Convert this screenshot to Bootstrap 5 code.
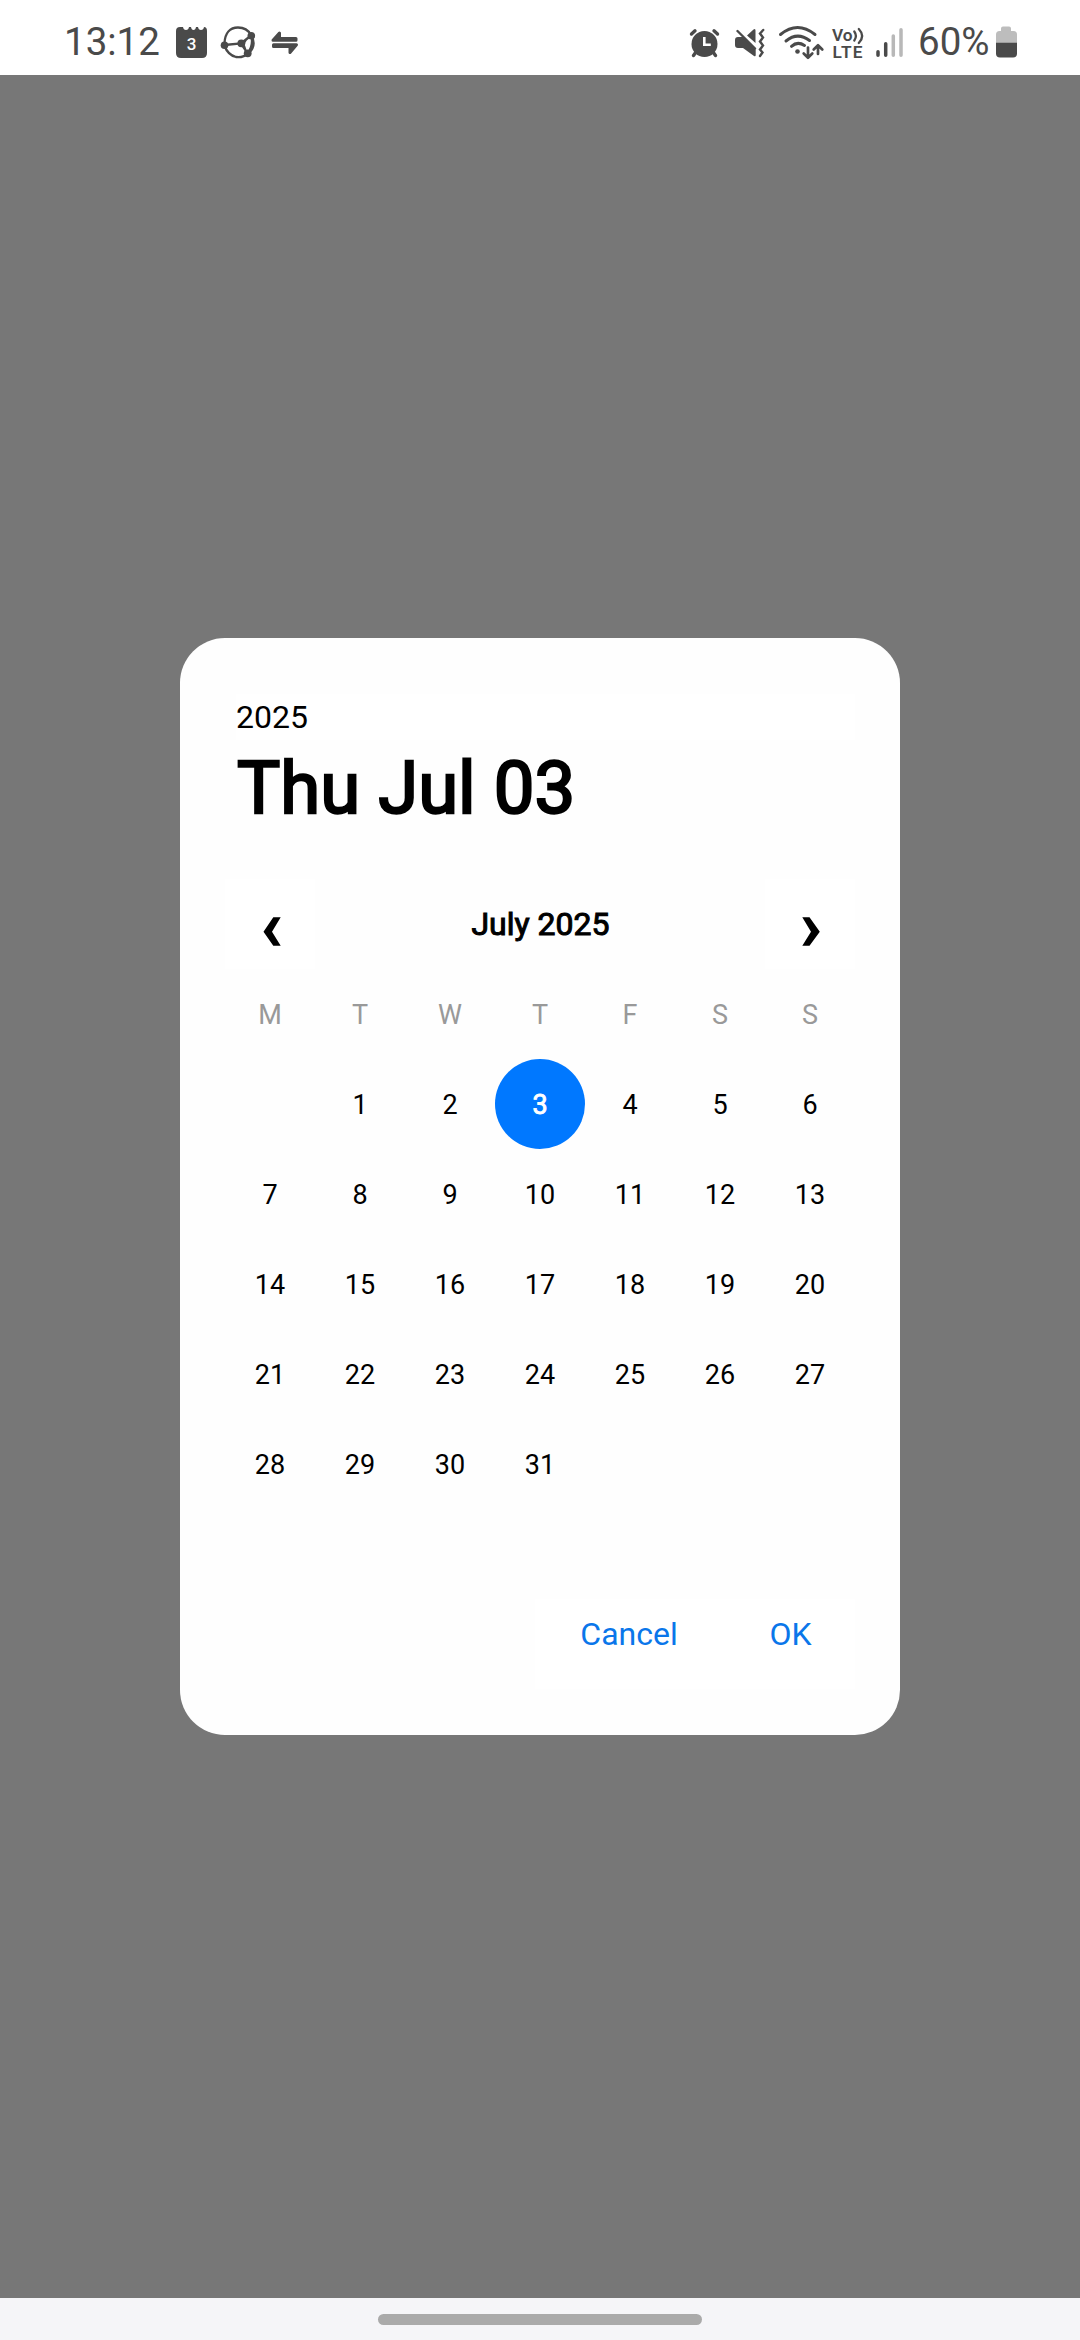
<!DOCTYPE html>
<html lang="en">
<head>
<meta charset="utf-8">
<meta name="viewport" content="width=device-width, initial-scale=1">
<title>Date picker</title>
<link href="https://cdn.jsdelivr.net/npm/bootstrap@5.3.0/dist/css/bootstrap.min.css" rel="stylesheet">
<style>
body{font-family:Roboto,"Liberation Sans",sans-serif;color:#000;background:#777}
.screen{width:1080px;height:2340px}
.status{height:75px;background:#fff;color:#4a4a4a;font-size:38.5px;line-height:75px;padding:4px 63px 0 64px;white-space:nowrap}
.status svg{margin-top:-4px;flex:none}
.clock{width:108px}
.batt-pct{width:75px}
.picker{width:720px;height:1097px;padding:56px 45px 46px;border:0;border-radius:45px;background:#fefefe}
.heading-block{height:185px;padding-left:11px}
.year{font-size:32px;line-height:46px;background:#fff}
.fauxbold{-webkit-text-stroke:.032em currentColor}
.picked{font-size:72.5px;line-height:90px;padding:4px 0 0 1px;font-weight:400;white-space:nowrap}
.arrow-btn{width:90px;height:90px;background:#fff;border:0;border-radius:0}
.month{font-size:32px;line-height:90px;padding-left:1px}
.week{display:grid;grid-template-columns:repeat(7,90px);grid-auto-rows:90px}
.week>span{font-size:27px;line-height:92px;text-align:center}
.week>.dow{color:#999}
.week>.chosen{background:#0078ff;color:#fff;border-radius:50%}
.actions{height:90px;width:320px;background:#fff}
.actions .btn{font-size:32px;line-height:46px;color:#0a76ea;border:0;border-radius:0;padding:12px 0 32px}
.actions .ok{width:129px}
.actions .cancel{width:191px;padding-right:3px}
.gesture{height:42px;background:#f5f5f8;padding-top:16px}
.pill{width:324px;height:11px;background:#aaa}
</style>
<script src="https://cdn.jsdelivr.net/npm/bootstrap@5.3.0/dist/js/bootstrap.bundle.min.js"></script>
</head>
<body>
<div class="screen d-flex flex-column">
  <header class="status d-flex justify-content-between">
    <div class="d-flex">
      <span class="clock">13:12</span>
      <!-- calendar -->
      <svg width="42" height="75" viewBox="172 0 42 75"><path fill="#4a4a4a" d="M180 27h3q.5 3 3 3t3-3h2q.500 3 2.500 3t2.500-3h2q.500 3 3 3t3-3h0q3 0 3 4v22q0 5-5 5h-21q-5 0-5-5V31q0-4 4-4z"/><text x="191.500" y="50" text-anchor="middle" font-size="17" font-weight="500" fill="#fff">3</text></svg>
      <!-- globe with nodes -->
      <svg width="48" height="75" viewBox="214 0 48 75"><g fill="none" stroke="#4a4a4a" stroke-width="2.300"><path d="M224.500 43C225 33 230 27.500 238 27.500Q247 27.500 251 35Q257 45 249 53Q243 58 236 57Q228 55 224.500 46M224.500 45L241 43.500L251 35.500M241 43.500L247.500 53M251.500 36Q243 40 244 46Q245 51 248 53M251 35Q254 44 248 53"/></g><g fill="#4a4a4a"><circle cx="224.500" cy="45.300" r="3.800"/><circle cx="241.300" cy="43.300" r="3.900"/><circle cx="251.300" cy="35.800" r="3.800"/><circle cx="247.700" cy="53.300" r="3.900"/></g></svg>
      <!-- transfer arrows -->
      <svg width="40" height="75" viewBox="262 0 40 75"><path fill="#4a4a4a" stroke="#4a4a4a" stroke-width="3" stroke-linejoin="round" stroke-linecap="round" d="M273 40.300L279.500 33L279.500 38.500H296V40.300ZM273.500 44.800H296.500L290 52.500V46.500H273.500Z"/></svg>
    </div>
    <div class="d-flex">
      <!-- alarm -->
      <svg width="42" height="75" viewBox="686 0 42 75"><g stroke="#4a4a4a" stroke-linecap="round" fill="none"><path stroke-width="3.400" d="M691.500 34L695 30.800M717.500 34L714 30.800M696 52l-2.500 3.500M713 52l2.500 3.500"/></g><circle cx="704.500" cy="44" r="13" fill="#4a4a4a"/><path fill="none" stroke="#fff" stroke-width="2.600" d="M704.300 37v7.800h6.500"/></svg>
      <!-- sound off, vibrate -->
      <svg width="46" height="75" viewBox="728 0 46 75"><path fill="#4a4a4a" d="M738 37h5l12.700 12.500V55q0 2-1.700 1L743 48h-5q-3 0-3-3v-5q0-3 3-3zM747 35.500L753.500 29.500q2-1.500 2 1V43z"/><path fill="none" stroke="#4a4a4a" stroke-width="2.400" stroke-linecap="round" d="M737.500 31L755 48.500M763.200 30L760 33.500L763 37.500L760 41.500L763 45.500L760 49.500L762.500 52.500L760 56"/></svg>
      <!-- wifi with traffic arrows -->
      <svg width="54" height="75" viewBox="774 0 54 75"><g fill="none" stroke="#4a4a4a" stroke-width="3" stroke-linecap="round"><path d="M780.500 34.500Q797.500 20.500 815 34.500M786 41Q797.500 31.500 809.500 40.500M791.500 46.300Q797.500 40.800 804.500 45.500"/><path stroke-width="2.700" stroke-linejoin="round" d="M808 47.500V57.500M803.700 53.500L808 57.700L812.300 53.500M818 54V46M813.700 49.500L818 45.300L822.300 49.500"/></g><circle cx="797.500" cy="51.500" r="2.300" fill="#4a4a4a"/></svg>
      <!-- VoLTE -->
      <svg width="40" height="75" viewBox="828 0 40 75"><g fill="#4a4a4a" font-weight="600" font-size="17.300"><text x="832" y="41" textLength="20.500">Vo</text><text x="832.500" y="58" textLength="30">LTE</text></g><path fill="none" stroke="#4a4a4a" stroke-width="2.300" stroke-linecap="round" d="M854.300 31.500Q857.500 36 854.300 40.500M858.800 29Q865.500 36 858.800 43"/></svg>
      <!-- signal -->
      <svg width="50" height="75" viewBox="868 0 50 75"><g stroke-width="3.500" stroke-linecap="round"><path stroke="#4a4a4a" d="M878 51.700V55.200M885.700 43.800V55.200"/><path stroke="#b8b8b8" d="M893.300 36V55.200M901 29.800V55.200"/></g></svg>
      <span class="batt-pct">60%</span>
      <svg width="24" height="75" viewBox="993 0 24 75"><path fill="#bdbdbd" d="M1001 31v-2.500q0-2 2-2h6q2 0 2 2V31h2.500q3.500 0 3.500 3.500V43h-21v-8.500q0-3.500 3.500-3.500z"/><path fill="#4a4a4a" d="M996 42.700h21V53.500q0 4-4 4h-13q-4 0-4-4z"/></svg>
    </div>
  </header>

  <main class="flex-grow-1 d-flex align-items-center justify-content-center">
    <div class="card picker d-flex flex-column">
      <div class="heading-block">
        <div class="year">2025</div>
        <div class="picked fauxbold">Thu Jul 03</div>
      </div>
      <div class="d-flex justify-content-between">
        <button class="arrow-btn p-0" aria-label="Previous month"><svg class="d-block" width="90" height="90" viewBox="225 879 90 90"><path d="M273.300 917.300H280.700L272 931.700L280.700 945.800H273.300L263.500 931.700Z"/></svg></button>
        <div class="month fauxbold">July 2025</div>
        <button class="arrow-btn p-0" aria-label="Next month"><svg class="d-block" width="90" height="90" viewBox="765 879 90 90"><path d="M809.500 917.300H802.300L811 931.700L802.300 945.800H809.500L819.800 931.700Z"/></svg></button>
      </div>
      <div class="week">
        <span class="dow">M</span><span class="dow">T</span><span class="dow">W</span><span class="dow">T</span><span class="dow">F</span><span class="dow">S</span><span class="dow">S</span>
        <span></span><span>1</span><span>2</span><span class="chosen fauxbold">3</span><span>4</span><span>5</span><span>6</span>
        <span>7</span><span>8</span><span>9</span><span>10</span><span>11</span><span>12</span><span>13</span>
        <span>14</span><span>15</span><span>16</span><span>17</span><span>18</span><span>19</span><span>20</span>
        <span>21</span><span>22</span><span>23</span><span>24</span><span>25</span><span>26</span><span>27</span>
        <span>28</span><span>29</span><span>30</span><span>31</span><span></span><span></span><span></span>
      </div>
      <div class="actions d-flex align-self-end mt-auto">
        <button class="btn cancel">Cancel</button>
        <button class="btn ok">OK</button>
      </div>
    </div>
  </main>

  <footer class="gesture d-flex justify-content-center"><div class="pill rounded-pill"></div></footer>
</div>
</body>
</html>
